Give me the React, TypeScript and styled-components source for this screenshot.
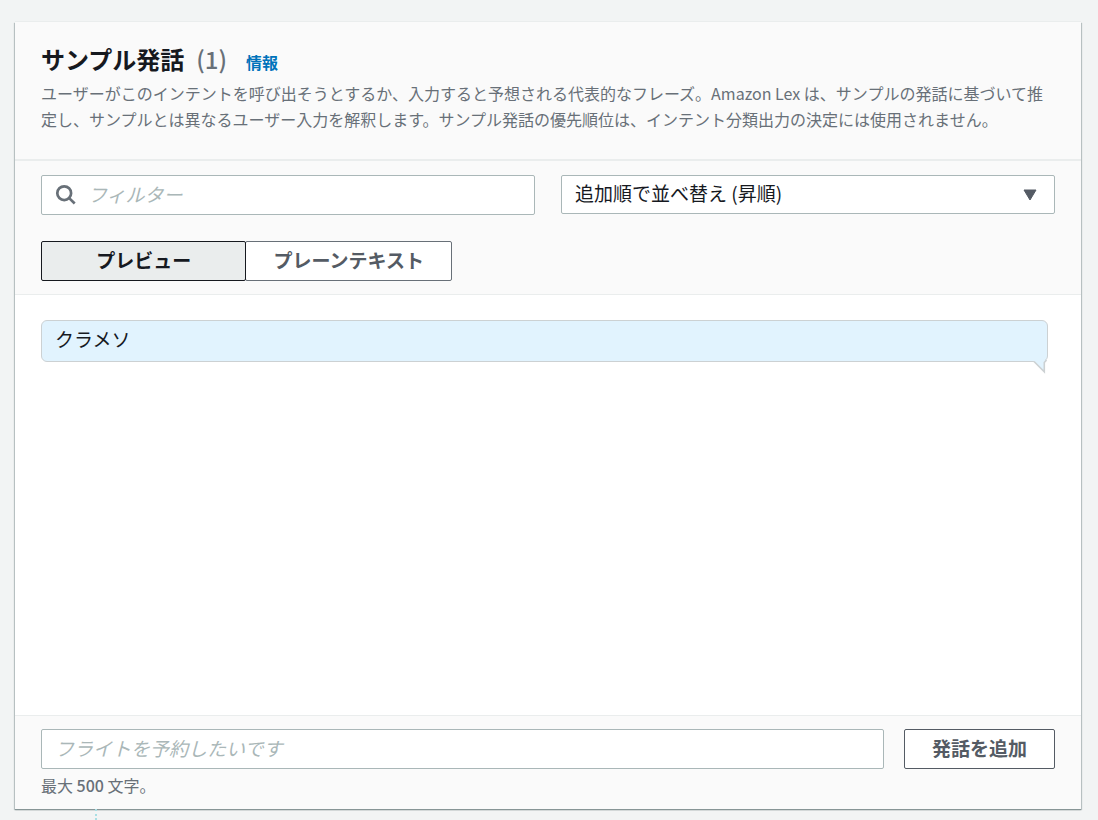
import React, { useState } from "react";
import styled, { createGlobalStyle } from "styled-components";

const GlobalStyle = createGlobalStyle`
  *, *::before, *::after { box-sizing: border-box; }
  body {
    margin: 0;
    background: #f2f4f4;
    color: #16191f;
    font-family: "Noto Sans CJK JP", "Noto Sans", sans-serif;
    font-size: 16px;
    line-height: 26px;
  }
  button, input, select { font-family: inherit; }
`;

const Page = styled.main`
  padding: 22px 17px 0 15px;
`;

const Card = styled.section`
  background: #fff;
  box-shadow: 0 -1px 0 0 #eaeded, 0 1px 1px 0 #879596,
    1px 1px 1px 0 rgba(0, 28, 36, 0.2), -1px 1px 1px 0 rgba(0, 28, 36, 0.2);
`;

const Header = styled.header`
  padding: 21px 26px 27px;
  background: #fafafa;
  border-bottom: 2px solid #eaeded;
`;

const TitleRow = styled.div`
  display: flex;
  align-items: baseline;
  margin-bottom: 5px;
`;

const Title = styled.h2`
  margin: 0;
  font-size: 24px;
  line-height: 32px;
  font-weight: 700;
`;

const Count = styled.span`
  margin-left: 12px;
  font-size: 24px;
  line-height: 32px;
  font-weight: 500;
  color: #687078;
`;

const InfoLink = styled.a`
  margin-left: 19px;
  font-weight: 700;
  color: #0073bb;
  text-decoration: none;
`;

const Description = styled.p`
  margin: 0;
  color: #687078;
`;

const Toolbar = styled.div`
  padding: 14px 26px 13px;
  background: #fafafa;
  border-bottom: 1px solid #eaeded;
`;

const Filters = styled.div`
  display: grid;
  grid-template-columns: 1fr 1fr;
  align-items: start;
  gap: 26px;
  margin-bottom: 26px;
`;

const Field = styled.div`
  position: relative;
  display: flex;
`;

const TextInput = styled.input<{ $withIcon?: boolean }>`
  flex: 1;
  min-width: 0;
  height: 40px;
  padding: 0 14px 4px ${(p) => (p.$withIcon ? "46px" : "13px")};
  border: 1px solid #aab7b8;
  border-radius: 2px;
  background: #fff;
  color: #16191f;
  font-size: 19px;
  &::placeholder {
    color: #aab7b8;
    font-style: italic;
    opacity: 1;
  }
`;

const SearchIcon = styled.svg`
  position: absolute;
  left: 14px;
  top: 9px;
  width: 21px;
  height: 21px;
  fill: none;
  stroke: #687078;
  stroke-width: 2.7;
  pointer-events: none;
`;

const Select = styled.select`
  appearance: none;
  flex: 1;
  min-width: 0;
  height: 39px;
  padding: 0 44px 4px 13px;
  border: 1px solid #aab7b8;
  border-radius: 2px;
  background: #fff;
  color: #16191f;
  font-size: 19px;
`;

const Caret = styled.svg`
  position: absolute;
  right: 18px;
  top: 14px;
  width: 14px;
  height: 12px;
  fill: #545b64;
  stroke: #545b64;
  stroke-linejoin: round;
  pointer-events: none;
`;

const Segments = styled.div`
  display: inline-grid;
  grid-template-columns: 1fr 1fr;
  vertical-align: top;
`;

const Segment = styled.button<{ $active: boolean }>`
  position: relative;
  z-index: ${(p) => (p.$active ? 1 : 0)};
  height: 40px;
  padding: 0 27px 4px;
  border: 1px solid ${(p) => (p.$active ? "#16191f" : "#687078")};
  border-radius: 2px;
  background: ${(p) => (p.$active ? "#eaeded" : "#fff")};
  color: ${(p) => (p.$active ? "#16191f" : "#545b64")};
  font-size: 19px;
  font-weight: 700;
  cursor: pointer;
  & + & { margin-left: -1px; }
`;

const Utterances = styled.ul`
  min-height: 420px;
  margin: 0;
  padding: 25px 33px 25px 26px;
  list-style: none;
`;

const Bubble = styled.li`
  position: relative;
  padding: 5px 13px 9px;
  border: 1px solid #ccd1d3;
  border-radius: 6px;
  background: #e1f3fe;
  font-size: 19px;
`;

const Tail = styled.svg`
  position: absolute;
  right: 0;
  top: 39px;
  width: 14px;
  height: 14px;
`;

const Footer = styled.form`
  padding: 13px 26px 11px;
  border-top: 1px solid #eaeded;
  background: #fafafa;
`;

const AddRow = styled.div`
  display: flex;
  gap: 20px;
  margin-bottom: 3px;
`;

const AddButton = styled.button`
  height: 40px;
  padding: 0 27px 4px;
  border: 1px solid #545b64;
  border-radius: 2px;
  background: #fff;
  color: #545b64;
  font-size: 19px;
  font-weight: 700;
  cursor: pointer;
`;

const Hint = styled.label`
  display: block;
  color: #687078;
`;

const Limit = styled.span`
  font-weight: 500;
`;

const Connector = styled.div`
  height: 11px;
  margin-left: 80px;
  border-left: 2px dotted #a9dfe4;
`;

const modes = ["プレビュー", "プレーンテキスト"];

export default function App() {
  const [mode, setMode] = useState(modes[0]);
  return (
    <>
      <GlobalStyle />
      <Page>
        <Card>
          <Header>
            <TitleRow>
              <Title>サンプル発話</Title>
              <Count>(1)</Count>
              <InfoLink href="#info">情報</InfoLink>
            </TitleRow>
            <Description>
              ユーザーがこのインテントを呼び出そうとするか、入力すると予想される代表的なフレーズ。Amazon Lex は、サンプルの発話に基づいて推定し、サンプルとは異なるユーザー入力を解釈します。サンプル発話の優先順位は、インテント分類出力の決定には使用されません。
            </Description>
          </Header>
          <Toolbar>
            <Filters>
              <Field>
                <TextInput $withIcon type="text" placeholder="フィルター" aria-label="フィルター" />
                <SearchIcon viewBox="0 0 21 21" aria-hidden="true">
                  <circle cx="9.2" cy="9.2" r="6.9" />
                  <path d="M13.9 13.9 19.7 19.5" />
                </SearchIcon>
              </Field>
              <Field>
                <Select aria-label="並べ替え">
                  <option>追加順で並べ替え (昇順)</option>
                </Select>
                <Caret viewBox="0 0 14 12" aria-hidden="true">
                  <path d="M1 1H13L7 11Z" />
                </Caret>
              </Field>
            </Filters>
            <Segments>
              {modes.map((m) => (
                <Segment
                  key={m}
                  type="button"
                  $active={m === mode}
                  aria-pressed={m === mode}
                  onClick={() => setMode(m)}
                >
                  {m}
                </Segment>
              ))}
            </Segments>
          </Toolbar>
          <Utterances>
            <Bubble>
              クラメソ
              <Tail viewBox="0 0 14 14" aria-hidden="true">
                <path d="M0 0H13L11.5 2V12L1 1.5Z" fill="#e1f3fe" />
                <path d="M1 1.5 11.3 11.8V2.5L13.5 0" fill="none" stroke="#ccd1d3" strokeWidth="1.6" />
              </Tail>
            </Bubble>
          </Utterances>
          <Footer onSubmit={(e) => e.preventDefault()}>
            <AddRow>
              <TextInput id="utterance" type="text" placeholder="フライトを予約したいです" />
              <AddButton type="submit">発話を追加</AddButton>
            </AddRow>
            <Hint htmlFor="utterance">
              最大 <Limit>500</Limit> 文字。
            </Hint>
          </Footer>
        </Card>
        <Connector />
      </Page>
    </>
  );
}
